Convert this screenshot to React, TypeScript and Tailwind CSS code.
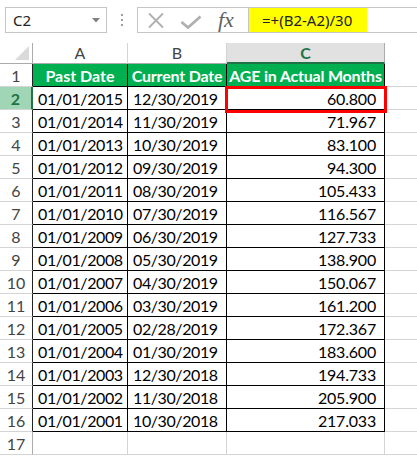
import React from "react";

const data: [string, string, string][] = [
  ["01/01/2015", "12/30/2019", "60.800"],
  ["01/01/2014", "11/30/2019", "71.967"],
  ["01/01/2013", "10/30/2019", "83.100"],
  ["01/01/2012", "09/30/2019", "94.300"],
  ["01/01/2011", "08/30/2019", "105.433"],
  ["01/01/2010", "07/30/2019", "116.567"],
  ["01/01/2009", "06/30/2019", "127.733"],
  ["01/01/2008", "05/30/2019", "138.900"],
  ["01/01/2007", "04/30/2019", "150.067"],
  ["01/01/2006", "03/30/2019", "161.200"],
  ["01/01/2005", "02/28/2019", "172.367"],
  ["01/01/2004", "01/30/2019", "183.600"],
  ["01/01/2003", "12/30/2018", "194.733"],
  ["01/01/2002", "11/30/2018", "205.900"],
  ["01/01/2001", "10/30/2018", "217.033"],
];

const cellFont = { fontFamily: "Lato, 'Open Sans', sans-serif" };

function Toolbar() {
  return (
    <div className="h-[43px] flex items-start pt-[7px] bg-white">
      <div
        className="ml-[5px] w-[102px] h-[26px] border border-[#c6c6c6] flex items-center justify-between pl-[7px] pr-[6px] text-[15px] text-[#222]"
        style={{ fontFamily: "'Noto Sans', sans-serif" }}
      >
        <span>C2</span>
        <svg width="8" height="5" viewBox="0 0 8 5">
          <polygon points="0,0 8,0 4,4.5" fill="#808080" />
        </svg>
      </div>
      <div className="w-[30px] h-[26px] flex flex-col items-center justify-center gap-[3px]">
        <div className="w-[2px] h-[2px] bg-[#a0a0a0]" />
        <div className="w-[2px] h-[2px] bg-[#a0a0a0]" />
        <div className="w-[2px] h-[2px] bg-[#a0a0a0]" />
      </div>
      <div className="flex-1 h-[26px] border-y border-[#c6c6c6] flex">
        <div className="w-[112px] h-full border-x border-[#c6c6c6] flex items-center">
          <svg width="18" height="17" viewBox="0 0 18 17" className="ml-[9px]">
            <path d="M2 1.5 L16 15.5 M16 1.5 L2 15.5" stroke="#b0b0b0" strokeWidth="1.8" />
          </svg>
          <svg width="22" height="14" viewBox="0 0 22 14" className="ml-[15px] mt-[4px]">
            <path d="M1.5 7 L8 12.5 L20.5 1.5" stroke="#b0b0b0" strokeWidth="2.8" fill="none" />
          </svg>
          <span
            className="ml-[16px] text-[22px] italic text-[#606060] leading-none"
            style={{ fontFamily: "'Liberation Serif', 'DejaVu Serif', serif" }}
          >
            fx
          </span>
        </div>
        <div
          className="w-[118px] h-full bg-[#ffff00] flex items-center pl-[13px] text-[15px] text-[#222]"
          style={{ fontFamily: "'Noto Sans', sans-serif" }}
        >
          =+(B2-A2)/30
        </div>
        <div className="flex-1" />
      </div>
    </div>
  );
}

const grid = "grid grid-cols-[33px_95px_99px_158px_1fr]";

function HeaderRow() {
  return (
    <div className={`${grid} h-[21px]`} style={cellFont}>
      <div className="border-r border-b border-[#ababab] bg-white relative">
        <svg width="14" height="14" viewBox="0 0 14 14" className="absolute right-[3px] bottom-[3px]">
          <polygon points="14,0 14,14 0,14" fill="#dadada" />
        </svg>
      </div>
      <div className="border-r border-b border-[#ababab] border-r-[#d4d4d4] flex items-center justify-center text-[16px] text-[#444] leading-none">
        A
      </div>
      <div className="border-r border-b border-[#ababab] border-r-[#d4d4d4] flex items-center justify-center text-[16px] text-[#444] leading-none">
        B
      </div>
      <div className="border-r border-b-2 border-r-[#ababab] border-b-[#217346] bg-[#e1e1e1] flex items-center justify-center text-[16px] font-bold text-[#217346] leading-none">
        C
      </div>
      <div />
    </div>
  );
}

function TitleRow() {
  return (
    <div className={`${grid} h-[23px]`} style={cellFont}>
      <div className="border-r border-b border-r-[#222] border-b-[#d4d4d4] flex items-end justify-center text-[16px] text-[#444] leading-[16px] pb-[2px]">
        1
      </div>
      <div className="border-r border-b border-black bg-[#00b050] flex items-end justify-center text-[16px] font-bold text-white leading-[16px] pb-[2px]">
        Past Date
      </div>
      <div className="border-r border-b border-black bg-[#00b050] flex items-end justify-center text-[16px] font-bold text-white leading-[16px] pb-[2px] whitespace-nowrap overflow-hidden tracking-[-0.2px]">
        Current Date
      </div>
      <div className="border-r border-b border-black bg-[#00b050] flex items-end justify-center text-[16px] font-bold text-white leading-[16px] pb-[2px] whitespace-nowrap overflow-hidden tracking-[-0.2px]">
        AGE in Actual Months
      </div>
      <div className="border-b border-[#d4d4d4]" />
    </div>
  );
}

function DataRow({ n, row }: { n: number; row: [string, string, string] }) {
  const selected = n === 2;
  return (
    <div className={`${grid} h-[23px]`} style={cellFont}>
      <div
        className={
          selected
            ? "border-r-2 border-b border-r-[#217346] border-b-[#d4d4d4] bg-[#a0d5b6] flex items-end justify-center text-[16px] font-bold text-[#217346] leading-[16px] pb-[2px]"
            : "border-r border-b border-r-[#222] border-b-[#d4d4d4] flex items-end justify-center text-[16px] text-[#444] leading-[16px] pb-[2px]"
        }
      >
        {n}
      </div>
      <div className="border-r border-b border-black flex items-end pl-[5px] text-[16px] tracking-[-0.4px] text-black leading-[16px] pb-[2px]">
        {row[0]}
      </div>
      <div className="border-r border-b border-black flex items-end pl-[5px] text-[16px] tracking-[-0.4px] text-black leading-[16px] pb-[2px]">
        {row[1]}
      </div>
      <div className="border-r border-b border-black flex items-end justify-end pr-[8px] text-[16px] tracking-[-0.2px] text-black leading-[16px] pb-[2px]">
        {row[2]}
      </div>
      <div className="border-b border-[#d4d4d4]" />
    </div>
  );
}

function EmptyRow({ n }: { n: number }) {
  return (
    <div className={`${grid} h-[23px]`} style={cellFont}>
      <div className="border-r border-b border-[#d4d4d4] border-r-[#ababab] flex items-end justify-center text-[16px] text-[#444] leading-[16px] pb-[2px]">
        {n}
      </div>
      <div className="border-r border-b border-[#d4d4d4]" />
      <div className="border-r border-b border-[#d4d4d4]" />
      <div className="border-r border-b border-[#d4d4d4]" />
      <div className="border-b border-[#d4d4d4]" />
    </div>
  );
}

export default function App() {
  return (
    <div className="w-[417px] h-[457px] bg-white overflow-hidden relative">
      <Toolbar />
      <HeaderRow />
      <TitleRow />
      {data.map((r, i) => (
        <DataRow key={i} n={i + 2} row={r} />
      ))}
      <EmptyRow n={17} />
      <div className="absolute left-[225px] top-[86px] w-[162px] h-[27px] border-[3px] border-[#ff0000] pointer-events-none" />
    </div>
  );
}
